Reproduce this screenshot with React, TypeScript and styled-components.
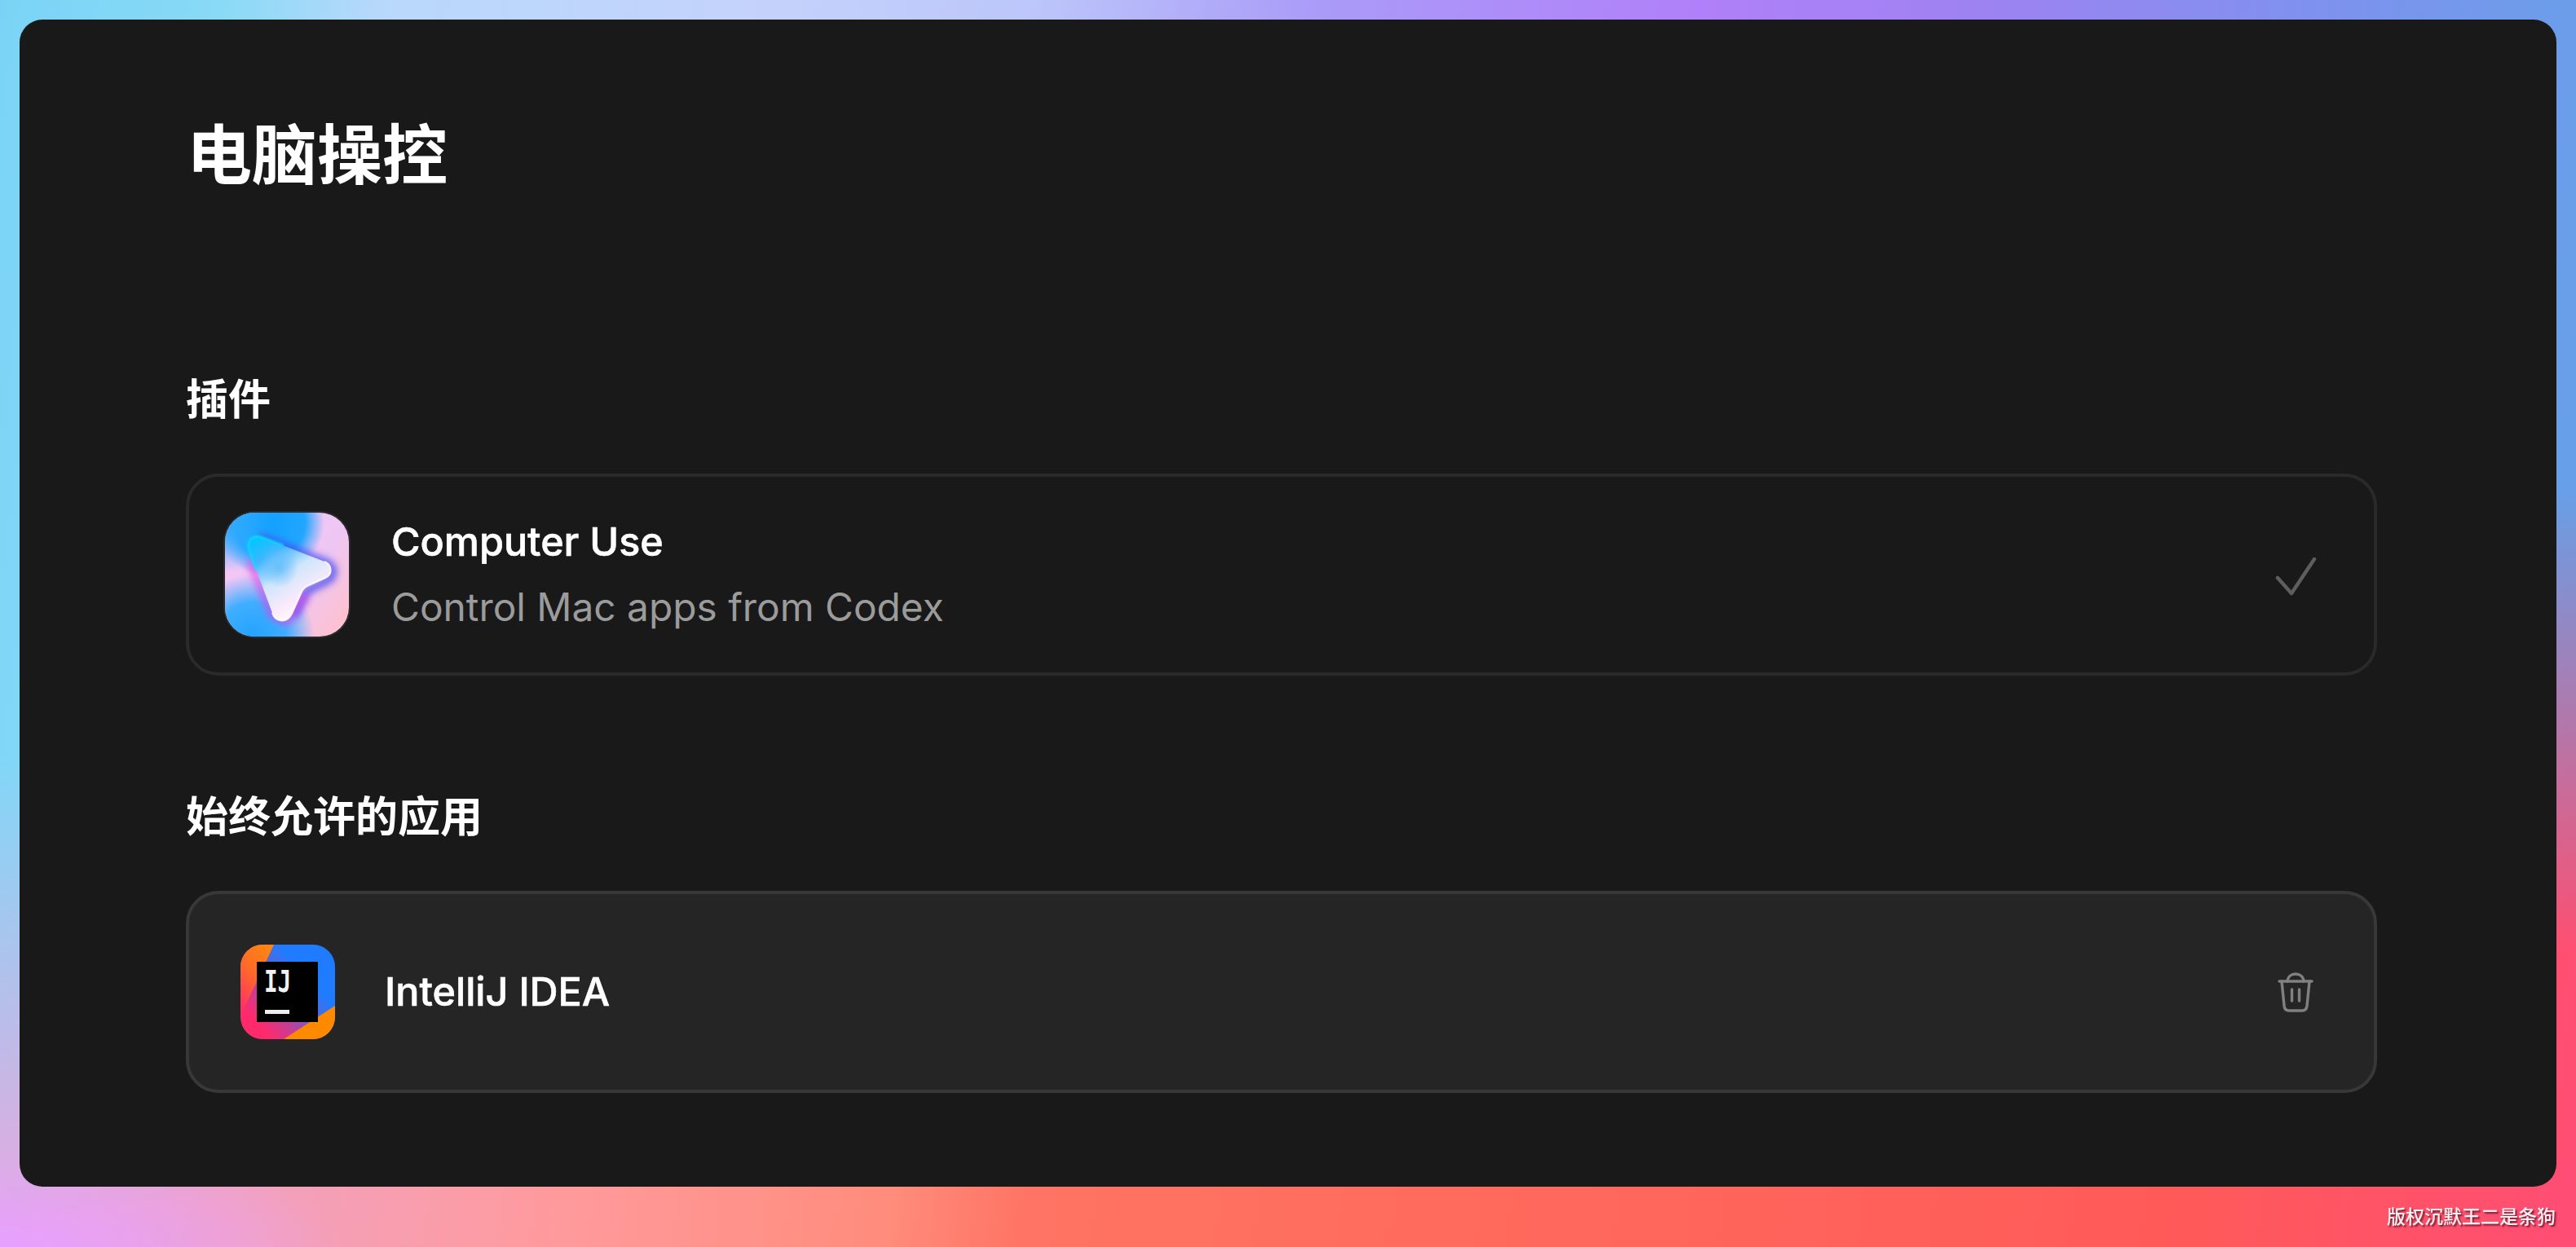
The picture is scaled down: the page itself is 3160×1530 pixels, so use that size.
import React from "react";
import styled, { createGlobalStyle } from "styled-components";

const Global = createGlobalStyle`
  html, body { margin: 0; padding: 0; width: 3160px; height: 1530px; overflow: hidden; }
  body { font-family: Inter, "Noto Sans CJK SC", sans-serif; }
`;

const Stage = styled.div`
  position: relative;
  box-sizing: border-box;
  width: 3160px;
  height: 1530px;
  padding: 24px 24px 74px;
  background:
    radial-gradient(420px 130px at 0px 1530px, #e6a0ff 0%, rgba(230,160,255,0) 100%),
    linear-gradient(97deg, #e0aef0 0%, #f0a2c4 13%, #ff9a9c 26%, #ff8c7c 38%, #ff7464 43%, #ff6e5e 54%, #ff5a58 85%, #ff4d74 100%);
  &::before {
    content: "";
    position: absolute;
    inset: 0;
    background: linear-gradient(97deg, #7ad3f6 0%, #88daf6 8%, #b8d8fb 14%, #c4d2fb 28%, #bcc6fa 38%, #aa9cf8 48%, #b080f9 62%, #9f82f2 72%, #8090ee 84%, #5fa4e6 100%);
    -webkit-mask-image: linear-gradient(174deg, #000 50%, transparent 80.6%);
    mask-image: linear-gradient(174deg, #000 50%, transparent 80.6%);
  }
`;

const Panel = styled.main`
  position: relative;
  box-sizing: border-box;
  height: 100%;
  background: #191919;
  border-radius: 28px;
  padding: 110px 220px 0 204px;
  color: #fff;
`;

const Title = styled.h1`
  margin: 0;
  padding-left: 1px;
  font: 600 80px/100px "Noto Sans CJK SC", sans-serif;
`;

const SectionTitle = styled.h2`
  margin: 0;
  font: 600 52px/60px Inter, "Noto Sans CJK SC", sans-serif;
`;

const Section = styled.section<{ $top: number }>`
  margin-top: ${(p) => p.$top}px;
  display: flex;
  flex-direction: column;
  gap: 60px;
`;

const Card = styled.div<{ $raised?: boolean; $pad: number }>`
  box-sizing: border-box;
  height: 248px;
  display: flex;
  align-items: center;
  padding: 0 68px 0 ${(p) => p.$pad}px;
  border: 4px solid ${(p) => (p.$raised ? "#383838" : "#2a2a2a")};
  border-radius: 40px;
  background: ${(p) => (p.$raised ? "#252525" : "transparent")};
`;

const IconFrame = styled.div`
  flex: none;
  width: 156px;
  height: 156px;
  display: flex;
`;

const SmallIconFrame = styled.div`
  flex: none;
  width: 116px;
  height: 116px;
  display: flex;
`;

const Texts = styled.div`
  flex: 1;
  margin-left: 50px;
  display: flex;
  flex-direction: column;
  gap: 20px;
`;

const Name = styled.div`
  font: 500 48.5px/60px Inter, sans-serif;
  -webkit-text-stroke: 0.6px #fff;
  color: #fff;
`;

const Description = styled.div`
  font: 400 47.8px/60px Inter, sans-serif;
  color: #9b9b9b;
`;

const AppName = styled.div`
  flex: 1;
  margin-left: 61px;
  font: 500 48.5px/60px Inter, sans-serif;
  -webkit-text-stroke: 0.6px #fff;
  color: #fff;
`;

const ActionIcon = styled.div`
  flex: none;
  width: 56px;
  height: 56px;
  display: flex;
`;

const Watermark = styled.div`
  position: absolute;
  right: 25px;
  bottom: 26px;
  font: 500 23px/26px "Noto Sans CJK SC", sans-serif;
  color: #fff;
  opacity: 0.92;
  text-shadow: 2px 2px 2px rgba(90, 20, 40, 0.9);
`;

const ComputerUseIcon = () => (
  <svg width="156" height="156" viewBox="-2 -2 156 156">
    <defs>
      <radialGradient id="cuA" cx="0.36" cy="0.08" r="0.44">
        <stop offset="0" stopColor="#12a0ff" />
        <stop offset="0.65" stopColor="#22a6ff" />
        <stop offset="1" stopColor="#22a6ff" stopOpacity="0" />
      </radialGradient>
      <radialGradient id="cuA2" cx="0.02" cy="0.1" r="0.38">
        <stop offset="0" stopColor="#30aaff" />
        <stop offset="1" stopColor="#30aaff" stopOpacity="0" />
      </radialGradient>
      <radialGradient id="cuB" cx="0.22" cy="1" r="0.5">
        <stop offset="0" stopColor="#22a4ff" />
        <stop offset="0.55" stopColor="#40aeff" />
        <stop offset="1" stopColor="#40aeff" stopOpacity="0" />
      </radialGradient>
      <linearGradient id="cuBase" x1="0" y1="0.2" x2="1" y2="0.9">
        <stop offset="0" stopColor="#f4c6f6" />
        <stop offset="0.6" stopColor="#eec6f4" />
        <stop offset="1" stopColor="#ffc0cc" />
      </linearGradient>
      <linearGradient id="cuArrow" x1="0.1" y1="0.05" x2="0.65" y2="0.95">
        <stop offset="0" stopColor="#08c4ff" />
        <stop offset="0.22" stopColor="#40b6ff" />
        <stop offset="0.5" stopColor="#cfe6fb" />
        <stop offset="0.8" stopColor="#fbeafc" />
        <stop offset="1" stopColor="#ffffff" />
      </linearGradient>
      <radialGradient id="cuCore" cx="0.5" cy="0.5" r="0.5">
        <stop offset="0" stopColor="#68c0fa" />
        <stop offset="1" stopColor="#68c0fa" stopOpacity="0" />
      </radialGradient>
      <filter id="cuBlur" x="-30%" y="-30%" width="160%" height="160%">
        <feGaussianBlur stdDeviation="5" />
      </filter>
      <filter id="cuSoft" x="-30%" y="-30%" width="160%" height="160%">
        <feGaussianBlur stdDeviation="1" />
      </filter>
    </defs>
    <rect x="-2" y="-2" width="156" height="156" rx="38" fill="#2b2b2d" />
    <rect x="0" y="0" width="152" height="152" rx="36" fill="url(#cuBase)" />
    <rect x="0" y="0" width="152" height="152" rx="36" fill="url(#cuA)" />
    <rect x="0" y="0" width="152" height="152" rx="36" fill="url(#cuA2)" />
    <rect x="0" y="0" width="152" height="152" rx="36" fill="url(#cuB)" />
    <path d="M42 30 L126 62 C136 68 134 80 124 84 L100 96 L84 128" stroke="#4048f0" strokeWidth="9" fill="none" opacity="0.9" filter="url(#cuBlur)" />
    <path d="M30 58 L58 126 L76 134 L100 100" stroke="#e040e8" strokeWidth="8" fill="none" opacity="0.8" filter="url(#cuBlur)" />
    <path
      d="M31 33 C34 29 40 28 45 30 L122 60 C132 64 132 76 123 80 L103 89 C98 91 96 93 94 97 L82 124 C76 136 62 135 58 123 L29 45 C28 40 29 36 31 33 Z"
      fill="url(#cuArrow)"
    />
    <path d="M58 123 C62 135 76 136 82 124 L94 97 C96 93 98 91 103 89 L123 80 C132 76 132 64 122 60" stroke="#ffffff" strokeWidth="2" fill="none" opacity="0.85" />
    <path d="M72 40 L45 30 C40 28 34 29 31 33 C29 36 28 40 29 45 L38 70" stroke="#10dcff" strokeWidth="3" fill="none" opacity="0.75" filter="url(#cuSoft)" />
    <ellipse cx="66" cy="66" rx="24" ry="26" fill="url(#cuCore)" />
  </svg>
);

const IdeaIcon = () => (
  <svg width="116" height="116" viewBox="0 0 116 116">
    <defs>
      <linearGradient id="ijBase" x1="0" y1="1" x2="1" y2="0.1">
        <stop offset="0.18" stopColor="#ff2a6c" />
        <stop offset="0.36" stopColor="#c04098" />
        <stop offset="0.58" stopColor="#4c6ae0" />
        <stop offset="0.72" stopColor="#1f7bff" />
        <stop offset="1" stopColor="#1f7bff" />
      </linearGradient>
      <linearGradient id="ijOrange" x1="0.7" y1="0" x2="0.2" y2="1">
        <stop offset="0" stopColor="#ff8410" />
        <stop offset="0.45" stopColor="#ff6a28" />
        <stop offset="1" stopColor="#ff2d68" />
      </linearGradient>
      <clipPath id="ijClip">
        <rect x="0" y="0" width="116" height="116" rx="27" />
      </clipPath>
    </defs>
    <g clipPath="url(#ijClip)">
      <rect width="116" height="116" fill="url(#ijBase)" />
      <path d="M0 0 H41 L0 88 Z" fill="url(#ijOrange)" />
      <path d="M53 116 L116 75 V116 Z" fill="#ff8a00" />
    </g>
    <rect x="20" y="21" width="75" height="74" fill="#000" />
    <text
      transform="translate(29 58) scale(0.92 1.22)"
      fill="#f2f2f2"
      fontFamily="'DejaVu Sans Mono', monospace"
      fontWeight="700"
      fontSize="30"
    >
      IJ
    </text>
    <rect x="30" y="80" width="30" height="5" fill="#eeeeee" />
  </svg>
);

const CheckIcon = () => (
  <svg width="56" height="56" viewBox="0 0 56 56" fill="none">
    <path d="M6 32 L23 51 L51 9" stroke="#5e5e5e" strokeWidth="4.5" strokeLinecap="round" strokeLinejoin="round" />
  </svg>
);

const TrashIcon = () => (
  <svg width="56" height="56" viewBox="0 0 56 56" fill="none" stroke="#808080" strokeWidth="3.4" strokeLinecap="round" strokeLinejoin="round">
    <path d="M8 15 H48" />
    <path d="M11 15 L14 45 C14.4 49 16.5 51 20 51 H36 C39.5 51 41.6 49 42 45 L45 15" />
    <path d="M18 15 C18.5 9 23 6 28 6 C33 6 37.5 9 38 15" />
    <path d="M23.5 25 V39" />
    <path d="M32.5 25 V39" />
  </svg>
);

export default function App() {
  return (
    <>
      <Global />
      <Stage>
        <Panel>
          <Title>电脑操控</Title>
          <Section $top={227}>
            <SectionTitle>插件</SectionTitle>
            <Card $pad={42}>
              <IconFrame>
                <ComputerUseIcon />
              </IconFrame>
              <Texts>
                <Name>Computer Use</Name>
                <Description>Control Mac apps from Codex</Description>
              </Texts>
              <ActionIcon>
                <CheckIcon />
              </ActionIcon>
            </Card>
          </Section>
          <Section $top={144}>
            <SectionTitle>始终允许的应用</SectionTitle>
            <Card $raised $pad={63}>
              <SmallIconFrame>
                <IdeaIcon />
              </SmallIconFrame>
              <AppName>IntelliJ IDEA</AppName>
              <ActionIcon>
                <TrashIcon />
              </ActionIcon>
            </Card>
          </Section>
        </Panel>
        <Watermark>版权沉默王二是条狗</Watermark>
      </Stage>
    </>
  );
}
